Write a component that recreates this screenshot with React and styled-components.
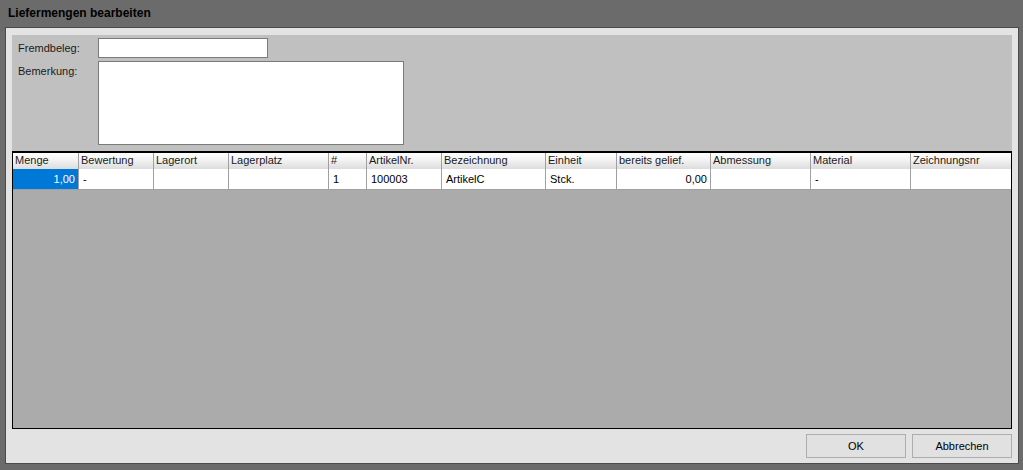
import React from "react";
import styled, { createGlobalStyle } from "styled-components";

const GlobalStyle = createGlobalStyle`
  html, body {
    margin: 0;
    padding: 0;
    background: #6b6b6b;
  }
  * {
    box-sizing: border-box;
  }
`;

const columns = [
  { key: "menge", title: "Menge", width: 66, align: "right" },
  { key: "bewertung", title: "Bewertung", width: 75 },
  { key: "lagerort", title: "Lagerort", width: 75 },
  { key: "lagerplatz", title: "Lagerplatz", width: 100 },
  { key: "nr", title: "#", width: 38 },
  { key: "artikelnr", title: "ArtikelNr.", width: 75 },
  { key: "bezeichnung", title: "Bezeichnung", width: 104 },
  { key: "einheit", title: "Einheit", width: 71 },
  { key: "geliefert", title: "bereits gelief.", width: 94, align: "right" },
  { key: "abmessung", title: "Abmessung", width: 100 },
  { key: "material", title: "Material", width: 100 },
  { key: "zeichnung", title: "Zeichnungsnr", width: 100 },
];

const rows = [
  {
    menge: "1,00",
    bewertung: "-",
    lagerort: "",
    lagerplatz: "",
    nr: "1",
    artikelnr: "100003",
    bezeichnung: "ArtikelC",
    einheit: "Stck.",
    geliefert: "0,00",
    abmessung: "",
    material: "-",
    zeichnung: "",
  },
];

function App() {
  return (
    <>
      <GlobalStyle />
      <Window>
        <TitleBar>Liefermengen bearbeiten</TitleBar>
        <Client>
          <FormPanel>
            <FormRow>
              <Label>Fremdbeleg:</Label>
              <TextBox type="text" />
            </FormRow>
            <FormRow>
              <Label>Bemerkung:</Label>
              <MemoBox />
            </FormRow>
          </FormPanel>

          <Grid>
            <HeaderRow>
              {columns.map((col) => (
                <HeaderCell key={col.key} $width={col.width}>
                  {col.title}
                </HeaderCell>
              ))}
            </HeaderRow>
            {rows.map((row, i) => (
              <DataRow key={i}>
                {columns.map((col, j) => (
                  <Cell
                    key={col.key}
                    $width={col.width}
                    $align={col.align}
                    $selected={j === 0}
                  >
                    {row[col.key]}
                  </Cell>
                ))}
              </DataRow>
            ))}
          </Grid>

          <ButtonBar>
            <Button>OK</Button>
            <Button>Abbrechen</Button>
          </ButtonBar>
        </Client>
      </Window>
    </>
  );
}

export default App;

const Window = styled.div`
  width: 1023px;
  height: 470px;
  display: flex;
  flex-direction: column;
  background: #6b6b6b;
  padding: 0 4px 6px 5px;
  font-family: "Liberation Sans", Arial, sans-serif;
  font-size: 11px;
  color: #000;
`;

const TitleBar = styled.div`
  height: 27px;
  display: flex;
  align-items: center;
  padding-left: 3px;
  padding-bottom: 1px;
  font-size: 12px;
  font-weight: bold;
  color: #000;
`;

const Client = styled.div`
  flex: 1;
  display: flex;
  flex-direction: column;
  background: #e3e3e3;
  border: 1px solid #4a4a4a;
  padding: 7px 6px 5px 6px;
`;

const FormPanel = styled.div`
  height: 116px;
  background: #c0c0c0;
  padding: 3px 6px 0 6px;
  display: flex;
  flex-direction: column;
  gap: 3px;
`;

const FormRow = styled.div`
  display: flex;
  align-items: flex-start;
`;

const Label = styled.div`
  width: 80px;
  padding-top: 4px;
  color: #1a1a1a;
`;

const TextBox = styled.input`
  width: 170px;
  height: 20px;
  border: 1px solid #7a7a7a;
  background: #fff;
  padding: 0 2px;
  margin: 0;
  font: inherit;
  outline: none;
`;

const MemoBox = styled.textarea`
  width: 306px;
  height: 84px;
  border: 1px solid #7a7a7a;
  background: #fff;
  margin: 0;
  padding: 2px;
  resize: none;
  font: inherit;
  outline: none;
`;

const Grid = styled.div`
  height: 278px;
  background: #ababab;
  border: 1px solid #000;
  border-top-width: 2px;
  display: flex;
  flex-direction: column;
`;

const HeaderRow = styled.div`
  display: flex;
  height: 16px;
  background: linear-gradient(#ffffff, #f4f4f4 40%, #dcdcdc);
`;

const HeaderCell = styled.div`
  width: ${(p) => p.$width}px;
  flex: none;
  padding: 1px 0 0 2px;
  border-right: 1px solid #a0a0a0;
  white-space: nowrap;
  overflow: hidden;
  color: #1a1a1a;
  &:last-child {
    border-right: none;
  }
`;

const DataRow = styled.div`
  display: flex;
  height: 21px;
  background: #fff;
  border-bottom: 1px solid #a0a0a0;
`;

const Cell = styled.div`
  width: ${(p) => p.$width}px;
  flex: none;
  display: flex;
  align-items: center;
  justify-content: ${(p) => (p.$align === "right" ? "flex-end" : "flex-start")};
  padding: 0 3px 0 4px;
  border-right: 1px solid #a0a0a0;
  background: ${(p) => (p.$selected ? "#0078d7" : "#fff")};
  color: ${(p) => (p.$selected ? "#fff" : "#000")};
  white-space: nowrap;
  overflow: hidden;
  &:last-child {
    border-right: none;
  }
`;

const ButtonBar = styled.div`
  flex: 1;
  display: flex;
  justify-content: flex-end;
  align-items: flex-end;
  gap: 6px;
`;

const Button = styled.button`
  width: 100px;
  height: 24px;
  margin: 0;
  padding: 0;
  background: #e1e1e1;
  border: 1px solid #adadad;
  font-family: "Liberation Sans", Arial, sans-serif;
  font-size: 11px;
  color: #000;
`;
